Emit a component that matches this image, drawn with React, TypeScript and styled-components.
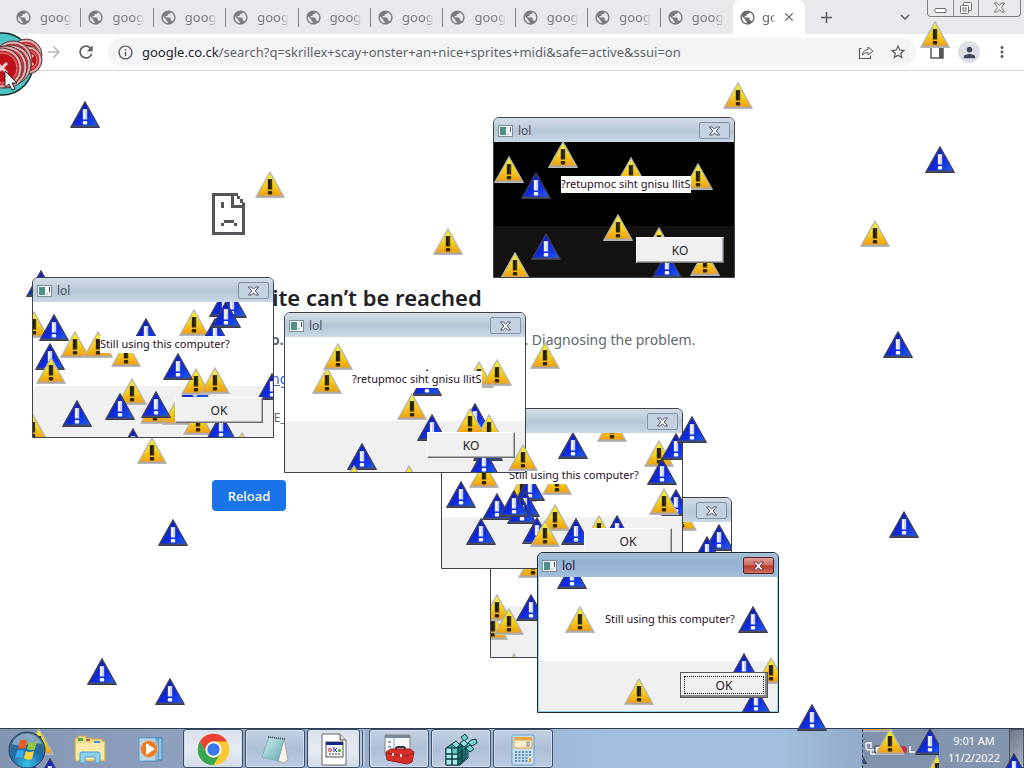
import React from "react";
import styled, { createGlobalStyle, css } from "styled-components";
import {
  MdPublic,
  MdRefresh,
  MdInfoOutline,
  MdStarBorder,
  MdPerson,
  MdMoreVert,
  MdKeyboardArrowDown,
  MdClose,
  MdAdd,
  MdArrowForward,
} from "react-icons/md";

const UI_FONT = '"Noto Sans", "Open Sans", sans-serif';

const GlobalStyle = createGlobalStyle`
  * { box-sizing: border-box; }
  body { margin: 0; background: #fff; font-family: ${UI_FONT}; }
  button, input { font-family: inherit; }
`;

const Screen = styled.div`
  position: relative;
  display: flex;
  flex-direction: column;
  min-height: 100vh;
  overflow: hidden;
`;

/* ---------- browser chrome ---------- */

const TabStrip = styled.header`
  display: flex;
  align-items: stretch;
  height: 34px;
  padding-left: 9px;
  background: #e8e9ec;
`;

const TabList = styled.nav`
  display: flex;
  flex: 0 1 724px;
  min-width: 0;
`;

const Tab = styled.button<{ $last?: boolean }>`
  display: flex;
  align-items: center;
  flex: 1 1 0;
  min-width: 0;
  gap: 8px;
  padding: 0 8px 0 6px;
  border: 0;
  background: linear-gradient(#85888c, #85888c) right 8px / 1px 19px no-repeat;
  ${(p) => p.$last && "background: none;"}
  color: #7a7c80;
  font-size: 13px;
  line-height: 18px;
  svg { flex: none; }
`;

const TabTitle = styled.span<{ $width: number }>`
  width: ${(p) => p.$width}px;
  overflow: hidden;
  text-align: left;
  white-space: nowrap;
  mask-image: linear-gradient(90deg, #000 70%, transparent);
`;

const ActiveTab = styled.div`
  display: flex;
  align-items: center;
  flex: none;
  width: 72px;
  padding-left: 6px;
  gap: 6px;
  border-radius: 7px 7px 0 0;
  background: #fff;
  color: #6a6c70;
  font-size: 13px;
  svg { flex: none; }
`;

const IconButton = styled.button<{ $size?: number }>`
  display: flex;
  align-items: center;
  justify-content: center;
  flex: none;
  width: ${(p) => p.$size ?? 20}px;
  height: ${(p) => p.$size ?? 20}px;
  padding: 0;
  border: 0;
  background: none;
  color: #5a5d61;
`;

const StripTools = styled.div`
  display: flex;
  align-items: center;
  justify-content: space-between;
  flex: 1;
  padding: 0 12px 0 11px;
`;

const WindowControls = styled.div`
  display: flex;
  width: 94px;
  height: 17px;
  margin-right: 3px;
  border: 1px solid #7c7f84;
  border-top: 0;
  border-radius: 0 0 4px 4px;
`;

const WindowControl = styled.button<{ $wide?: boolean }>`
  display: flex;
  justify-content: center;
  flex: ${(p) => (p.$wide ? 5 : 3)};
  padding: 1px 0 0;
  border: 0;
  background: none;
  & + & { border-left: 1px solid #8b8e93; }
`;

const Toolbar = styled.div`
  display: flex;
  align-items: center;
  height: 37px;
  padding: 0 12px 0 44px;
  gap: 12px;
  border-bottom: 1px solid #d4d5d7;
  background: #fff;
`;

const Omnibox = styled.form`
  display: flex;
  align-items: center;
  flex: 1;
  min-width: 0;
  height: 28px;
  padding: 0 8px 0 9px;
  gap: 8px;
  border-radius: 14px;
  background: #f3f4f5;
`;

const OmniboxActions = styled.div`
  display: flex;
  gap: 12px;
`;

const Address = styled.div`
  flex: 1;
  min-width: 0;
  height: 20px;
  color: #5f6368;
  font-size: 13px;
  line-height: 20px;
  white-space: nowrap;
  b { color: #25272a; font-weight: 400; }
`;

const Avatar = styled.button`
  display: flex;
  align-items: center;
  justify-content: center;
  width: 22px;
  height: 22px;
  padding: 0;
  border: 0;
  border-radius: 50%;
  background: #dcdfe6;
  color: #3d4a5c;
`;

/* ---------- error page ---------- */

const Page = styled.main`
  flex: 1;
  padding: 122px 24px 20px 212px;
  color: #646669;
  font-size: 14px;
  line-height: 20px;
  svg { display: block; }
`;

const Heading = styled.h1`
  margin: 45px 0 0;
  color: #202124;
  font-size: 22px;
  font-weight: 600;
  line-height: 34px;
`;

const Line = styled.p`
  margin: 16px 0 19px;
  white-space: nowrap;
`;

const Link = styled.a`
  color: #3567c8;
`;

const Code = styled.p`
  margin: 19px 0 52px;
  font-size: 12px;
`;

const Reload = styled.button`
  display: block;
  width: 74px;
  height: 31px;
  padding: 0;
  border: 0;
  border-radius: 4px;
  background: #1a73e8;
  color: #fff;
  font-size: 13px;
  font-weight: 500;
`;

/* ---------- stray warning icons ---------- */

type Mark = [kind: "y" | "b", left: number, top: number];

const Spot = styled.svg<{ $x: number; $y: number }>`
  position: absolute;
  left: ${(p) => p.$x}px;
  top: ${(p) => p.$y}px;
  width: 30px;
  height: 28px;
  pointer-events: none;
`;

function Warn({ mark: [kind, x, y] }: { mark: Mark }) {
  const blue = kind === "b";
  return (
    <Spot $x={x} $y={y} viewBox="0 0 30 28" aria-hidden="true">
      <path d="M15 .5 29.5 26.5H.5Z" fill={blue ? "#474a60" : "#b0aaa4"} stroke={blue ? "#3a3c50" : "#b9b7bb"} strokeLinejoin="round" />
      <path d="M15 2.300 27.500 24.600H2.500Z" fill={blue ? "url(#blueFill)" : "url(#yellowFill)"} />
      <path d="M12.800 8h4.400v10.500h-4.400Z" fill={blue ? "#cdd3fb" : "#3a300a"} />
      <path d="M13.500 9h1.500v9h-1.500Z" fill={blue ? "#fff" : "#1c1704"} />
      <rect x="12.800" y="20" width="4.400" height="3.500" rx="1" fill={blue ? "#f4f6ff" : "#30280a"} />
    </Spot>
  );
}

const Marks = ({ items }: { items: Mark[] }) => (
  <>
    {items.map((m, i) => (
      <Warn key={i} mark={m} />
    ))}
  </>
);

/* ---------- message boxes ---------- */

const Box = styled.section<{ $x: number; $y: number; $active?: boolean }>`
  position: absolute;
  isolation: isolate;
  left: ${(p) => p.$x}px;
  top: ${(p) => p.$y}px;
  display: flex;
  flex-direction: column;
  width: 242px;
  height: 161px;
  overflow: hidden;
  border: 1px solid ${(p) => (p.$active ? "#1d2a38" : "#3d444d")};
  border-radius: 6px 6px 0 0;
  background: ${(p) => (p.$active ? "#8fd5ea" : "#dfe6ee")};
  ${(p) => p.$active && "padding: 0 1px 1px;"}
`;

const TitleBar = styled.div<{ $active?: boolean }>`
  position: relative;
  z-index: 1;
  display: flex;
  align-items: center;
  flex: none;
  height: 24px;
  padding: 1px ${(p) => (p.$active ? 3 : 4)}px 0;
  gap: 5px;
  background: ${(p) =>
    p.$active
      ? "linear-gradient(#a9c0d8, #93b1d3 40%, #a5bedb)"
      : "linear-gradient(#d3dde7, #b7c7d7 55%, #c9d7e6)"};
  color: ${(p) => (p.$active ? "#20203a" : "#50555c")};
  font-size: 12px;
  line-height: 20px;
`;

const Caption = styled.span`
  flex: 1;
`;

const Close = styled.button<{ $active?: boolean }>`
  display: flex;
  align-items: center;
  justify-content: center;
  width: 31px;
  height: 17px;
  padding: 0;
  border: 1px solid ${(p) => (p.$active ? "#5a2226" : "#8592a5")};
  border-radius: 2px;
  background: ${(p) =>
    p.$active ? "linear-gradient(#e0a097, #cc6a5d 48%, #b53a2c 52%, #cf6f5c)" : "#c3d1e0"};
`;

const Body = styled.div<{ $dark?: boolean; $active?: boolean }>`
  display: flex;
  align-items: center;
  flex: 1;
  padding-left: ${(p) => (p.$active ? 66 : 67)}px;
  background: ${(p) => (p.$dark ? "#000" : "#fff")};
`;

const Message = styled.p<{ $bare?: boolean }>`
  position: relative;
  z-index: 1;
  margin: 0;
  height: 17px;
  background: ${(p) => (p.$bare ? "none" : "#fff")};
  color: #2a0f22;
  font-size: 11px;
  line-height: 16px;
  white-space: nowrap;
`;

const Footer = styled.div<{ $dark?: boolean; $active?: boolean }>`
  display: flex;
  align-items: flex-start;
  justify-content: flex-end;
  flex: none;
  height: ${(p) => (p.$active ? 50 : 51)}px;
  padding: 11px ${(p) => (p.$active ? 9 : 10)}px 0;
  background: ${(p) => (p.$dark ? "#131211" : "#f0f0f0")};
`;

const Push = styled.button<{ $focus?: boolean }>`
  position: relative;
  z-index: 1;
  width: 88px;
  height: 26px;
  padding: 0;
  border: 1px solid;
  border-color: #fafafa #707070 #707070 #fafafa;
  background: #f0f0f0;
  box-shadow: inset -1px -1px 0 #b0b0b0;
  color: #222;
  font-size: 12px;
  ${(p) =>
    p.$focus &&
    css`
      border-color: #555;
      box-shadow: inset -2px -2px 0 #858585, inset 1px 1px 0 #fff;
      outline: 1px dotted #111;
      outline-offset: -5px;
    `}
`;

type DialogProps = {
  x: number;
  y: number;
  marks: Mark[];
  mirrored?: boolean;
  dark?: boolean;
  active?: boolean;
};

/* Mark positions count from the outer edge of the box, inside its 1px border. */
const insideBorder = ([kind, x, y]: Mark): Mark => [kind, x - 1, y - 1];

function Dialog({ x, y, marks, mirrored, dark, active }: DialogProps) {
  return (
    <Box $x={x} $y={y} $active={active} role="dialog" aria-label="lol">
      <TitleBar $active={active}>
        <svg width="15" height="12" viewBox="0 0 15 12" aria-hidden="true">
          <rect x=".5" y=".5" width="14" height="11" fill="#f4f7fa" stroke="#7f8d99" />
          <rect x="2" y="2" width="6" height="8" fill="#4e8f8b" />
          <path d="M9.500 9h1M12.500 2v5" stroke="#4a5666" />
        </svg>
        <Caption>lol</Caption>
        <Close $active={active} aria-label="Close">
          <svg width="13" height="10" viewBox="0 0 13 10">
            <path
              d="M1.500 1h3l2 2.200 2-2.200h3L8.200 5l3.300 4h-3l-2-2.200L4.500 9h-3l3.300-4Z"
              fill="#fff"
              stroke={active ? "#70343a" : "#4d5566"}
            />
          </svg>
        </Close>
      </TitleBar>
      <Body $dark={dark} $active={active}>
        <Marks items={marks.map(insideBorder)} />
        <Message $bare={active}>{mirrored ? "?retupmoc siht gnisu llitS" : "Still using this computer?"}</Message>
      </Body>
      <Footer $dark={dark} $active={active}>
        <Push $focus={active}>{mirrored ? "KO" : "OK"}</Push>
      </Footer>
    </Box>
  );
}

const boxes: DialogProps[] = [
  {
    x: 490, y: 497,
    marks: [["y", 177, 7], ["b", 214, 27], ["b", 202, 39], ["y", 28, 54], ["y", -12, 116], ["y", -8, 97], ["b", 26, 97], ["y", 4, 111], ["y", 9, 156]],
  },
  {
    x: 441, y: 408,
    marks: [
      ["y", 156, 7], ["b", 117, 24], ["y", 203, 32], ["b", 220, 25], ["b", 206, 50], ["b", 5, 73], ["y", 28, 53],
      ["y", 66, 67], ["y", 101, 60], ["b", 74, 66], ["b", 69, 82], ["b", 41, 85], ["b", 66, 89], ["b", 58, 82],
      ["b", 220, 81], ["y", 208, 80], ["y", 99, 96], ["y", 143, 107], ["b", 161, 107], ["b", 120, 110],
      ["b", 81, 109], ["y", 89, 112], ["b", 25, 110],
    ],
  },
  {
    x: 284, y: 312, mirrored: true,
    marks: [
      ["y", 28, 55], ["y", 39, 31], ["y", 180, 49], ["y", 198, 47], ["b", 128, 57], ["y", 113, 81], ["b", 133, 102],
      ["b", 176, 91], ["y", 190, 102], ["y", 171, 96], ["b", 63, 131], ["y", 55, 153], ["y", 110, 153],
      ["b", 189, 122], ["b", 185, 136],
    ],
  },
  {
    x: 32, y: 277,
    marks: [
      ["y", -13, 34], ["b", 7, 37], ["b", 99, 41], ["y", 147, 32], ["b", 168, 41], ["b", 177, 13], ["b", 185, 14],
      ["b", 179, 24], ["y", 28, 54], ["y", 51, 54], ["y", 79, 63], ["b", 3, 66], ["y", 4, 80], ["b", 148, 96],
      ["y", 149, 91], ["b", 131, 76], ["y", 168, 90], ["y", 85, 101], ["b", 73, 116], ["y", 108, 120],
      ["y", 130, 121], ["b", 109, 114], ["b", 30, 123], ["y", 151, 131], ["b", 174, 136], ["b", 225, 96],
      ["y", -14, 137], ["b", 86, 151], ["y", 195, 155],
    ],
  },
  {
    x: 493, y: 117, mirrored: true, dark: true,
    marks: [
      ["y", 1, 39], ["y", 55, 24], ["b", 28, 55], ["y", 123, 40], ["y", 190, 46], ["y", 110, 97], ["y", 151, 110],
      ["b", 38, 116], ["y", 7, 135], ["b", 159, 134], ["y", 197, 132],
    ],
  },
  {
    x: 537, y: 552, active: true,
    marks: [["b", 20, 10], ["y", 28, 54], ["b", 201, 54], ["b", 192, 101], ["y", 219, 105], ["y", 87, 126], ["b", 204, 135]],
  },
];

const behind: Mark[] = [
  ["y", 723, 82], ["y", 255, 171], ["y", 433, 228], ["y", 860, 220], ["y", 920, 21], ["y", 137, 437], ["y", 530, 342],
  ["b", 70, 101], ["b", 925, 146], ["b", 883, 331], ["b", 158, 519], ["b", 889, 511], ["b", 87, 658], ["b", 155, 678],
  ["b", 797, 704], ["b", 26, 270],
];

const front: Mark[] = [["b", 677, 416], ["y", 508, 444]];

/* ---------- error badges under the mouse pointer ---------- */

const Pointer = styled.svg`
  position: absolute;
  left: 0;
  top: 30px;
`;

const Badge = ({ x, y, r }: { x: number; y: number; r: number }) => (
  <g>
    <circle cx={x} cy={y} r={r} fill="#c9a0a0" stroke="#5f3437" strokeWidth="1" />
    <circle cx={x} cy={y} r={r - 2} fill="#c4323a" stroke="#ecd0d0" strokeWidth="1" />
    <circle cx={x} cy={y} r={r - 5} fill="#c01018" stroke="#dc8888" strokeWidth="1" />
    <path d={`M${x - 5} ${y - 5}l10 10m0-10-10 10`} stroke="#f0d0d0" strokeWidth="3" />
  </g>
);

/* ---------- taskbar ---------- */

const Taskbar = styled.footer`
  position: relative;
  display: flex;
  height: 40px;
  overflow: hidden;
  border-top: 1px solid #2f3d52;
  background: linear-gradient(90deg, #8495b2, #8fa1bf 18%, #9ab3d2 45%, #a3bfdf 60%, #a3bfdf 76%, #94abc9 84%);
`;

const Start = styled.button`
  position: relative;
  width: 59px;
  padding: 0 0 0 8px;
  border: 0;
  background: none;
  svg:last-child { position: relative; display: block; }
`;

const Pinned = styled.button`
  display: flex;
  align-items: center;
  justify-content: center;
  width: 62px;
  padding: 2px 0 0;
  border: 0;
  background: none;
`;

const Running = styled(Pinned)<{ $lit?: boolean; $stacked?: boolean }>`
  width: ${(p) => (p.$stacked ? 53 : 60)}px;
  margin-right: ${(p) => (p.$stacked ? 9 : 2)}px;
  border: 1px solid #3f4f68;
  border-radius: 3px;
  background: ${(p) =>
    p.$lit ? "linear-gradient(#d9e1ec, #e6ebf3 50%, #d3dcea)" : "linear-gradient(#c4d1e3, #aebfd8 50%, #bccbe1)"};
  box-shadow: inset 0 0 0 1px #d5dfec${(p) => (p.$stacked ? ", 3px 0 0 -1px #b5c4d9, 4px 0 0 -1px #4a5970, 6px 0 0 -1px #b5c4d9" : "")};
`;

const Tray = styled.div`
  position: relative;
  display: flex;
  width: 162px;
  margin-left: auto;
  border-left: 1px dashed #3c4c64;
  background: #8192ac;
`;

const TrayIcons = styled.div`
  position: relative;
  flex: 1;
  overflow: hidden;
`;

const Clock = styled.time`
  position: relative;
  width: 70px;
  padding-top: 3px;
  background: #8394ae;
  color: #fff;
  font-size: 11px;
  line-height: 17px;
  text-align: center;
`;

const ShowDesktop = styled.button`
  width: 15px;
  padding: 0;
  border: 1px solid #4a5566;
  background: linear-gradient(135deg, #6c7888, #a9b3c0);
`;

function StartOrb() {
  return (
    <svg width="38" height="38" viewBox="0 0 38 38">
      <circle cx="19" cy="20" r="18" fill="url(#orb)" stroke="#25415f" />
      <path d="M4 14a16 16 0 0 1 30 0c-9-3-20 4-30 0Z" fill="#cfe0ee" opacity=".5" />
      <path d="M12 11c3-2 5-1 7 0l-2 8c-3-1-5-1-7 0Z" fill="#ee5a24" />
      <path d="M21 12c3 1 5 1 8-1l-2 8c-3 2-5 1-8 0Z" fill="#93c83e" />
      <path d="M9 21c3-2 5-1 7 0l-2 7c-2-1-4-1-7 0Z" fill="#3aa5e8" />
      <path d="M18 21c3 2 5 1 8 0l-2 8c-3 1-5 1-8-1Z" fill="#fdd33c" />
    </svg>
  );
}

function FolderIcon() {
  return (
    <svg width="34" height="32" viewBox="0 0 34 32">
      <path d="M2 4h3V2h8v2h6v1h10v2h3v20H2Z" fill="#f0da86" stroke="#c2a75a" />
      <path d="M5 4h5v3H5Z" fill="#4ca64c" />
      <path d="M13 5h4v2h-4Z" fill="#cc4d38" />
      <path d="M21 7h6v2h-6Z" fill="#4b8fd0" />
      <path d="M3 9h28v16H3Z" fill="#f8eaa8" />
      <path d="M7 29V20q0-2 2-2h16q2 0 2 2v9h-5v-6H12v6Z" fill="#8fd0ec" stroke="#5a9fc5" />
    </svg>
  );
}

function MediaIcon() {
  return (
    <svg width="30" height="28" viewBox="0 0 30 28">
      <path d="M9 2h16v22H9Z" fill="#8fc4e6" stroke="#3b86bd" />
      <path d="M5 3h16v22H5Z" fill="#b7dcf2" stroke="#3b86bd" />
      <path d="M2 2h17v23H2Z" fill="#b9d6ea" stroke="#5b9dca" />
      <circle cx="12" cy="13" r="8.500" fill="#ee7a22" stroke="#d9c4b0" />
      <path d="m9 7 9 6-9 6Z" fill="#fff" />
    </svg>
  );
}

function ChromeIcon() {
  return (
    <svg width="33" height="33" viewBox="0 0 48 48">
      <circle cx="24" cy="24" r="23" fill="#fcc934" />
      <path d="M4.100 12.500A23 23 0 0 1 43.900 12.500H24A11.500 11.500 0 0 0 14 29.700Z" fill="#ea4335" />
      <path d="M4.100 12.500 14 29.700A11.500 11.500 0 0 0 34 29.700L24 47A23 23 0 0 1 4.100 12.500Z" fill="#34a853" />
      <circle cx="24" cy="24" r="11.500" fill="#fff" />
      <circle cx="24" cy="24" r="9" fill="#3b78e7" />
    </svg>
  );
}

function NotepadIcon() {
  return (
    <svg width="34" height="32" viewBox="0 0 34 32">
      <path d="m26 4 4 22-4 3-6-2Z" fill="#f4f2ea" stroke="#a8a69a" />
      <path d="M11 3 26 5 20 27 4 23Z" fill="url(#note)" stroke="#7fb0b4" />
      <path d="m10 3 17 2" stroke="#56636a" strokeWidth="2" strokeDasharray="1 1" />
    </svg>
  );
}

function BatchIcon() {
  return (
    <svg width="26" height="33" viewBox="0 0 26 33">
      <path d="M1 1h18l6 6v25H1Z" fill="#fff" stroke="#666" />
      <path d="M19 1v6h6" fill="#ddd" stroke="#555" />
      <rect x="5" y="9" width="17" height="15" fill="#f2f2f2" stroke="#555" />
      <path d="M5 9h17v3H5Z" fill="#1c2585" />
      <circle cx="9" cy="17" r="1.500" fill="none" stroke="#c33" />
      <path d="M13 14v5m3-4-2 2 2 2" stroke="#22c" fill="none" />
      <circle cx="18.500" cy="17.500" r="1.500" fill="#3a3" />
      <path d="M8 21h11" stroke="#444" strokeDasharray="2 1" />
    </svg>
  );
}

function ToolboxIcon() {
  return (
    <svg width="34" height="34" viewBox="0 0 34 34">
      <path d="M3 2h25v20H3Z" fill="#f5f7fa" stroke="#888" />
      <path d="M3 2h25v3H3Z" fill="#7c8794" />
      <path d="M6 8h3v2H6Zm0 5h3v2H6Z" fill="#8fa9cc" />
      <path d="M12 5v12" stroke="#9aa" />
      <path d="M14 17v-1q0-2 2-2h5q2 0 2 2v1" fill="none" stroke="#333" strokeWidth="2" />
      <path d="m4 19 5-3h19l4 3-2 10-5 2-20-4Z" fill="#d3302a" stroke="#a01d1a" />
      <path d="m4 20 20 3 8-3" stroke="#94201d" fill="none" />
      <path d="M11 20v3m8-2v3" stroke="#e8d8d8" strokeWidth="2" />
    </svg>
  );
}

function RegistryIcon() {
  return (
    <svg width="34" height="34" viewBox="0 0 34 34" stroke="#10383c">
      <path d="m2 15 6-4h14l2 4v10l-8 7H2Z" fill="#2f9ea0" />
      <path d="M2 15h6v6H2Zm0 6h6v5H2Zm0 5h6v6H2Zm6-5h6v5H8Zm0 5h6v6H8Z" fill="#a7ecec" />
      <path d="M8 15h6v6H8Z" fill="#63cbcb" />
      <path d="m14 15 4-3v6l-4 3Zm0 6 4-3v6l-4 3Zm0 6 4-3v5l-4 3Zm4-9 4-4v6l-4 4Zm0 6 4-4v5l-4 4Z" fill="#18787c" />
      <path d="m8 11 4-3 4 4-4 3Zm8-1 4-3 4 4-4 3Z" fill="#8fe0e0" />
      <path d="m17 4 4-3 3 4-4 3Zm10 3 5-1 1 4-5 3-4-3Zm-5 8 4-3 4 4-4 3Z" fill="#6fd6d6" />
    </svg>
  );
}

function CalculatorIcon() {
  return (
    <svg width="24" height="32" viewBox="0 0 24 32">
      <rect x="1" y="1" width="22" height="30" rx="1" fill="#c9dff0" stroke="#6f9fc6" />
      <rect x="3" y="3" width="18" height="3" fill="#eda74b" />
      <rect x="3" y="6" width="18" height="8" fill="#f7ecd0" stroke="#e0a54f" />
      <rect x="16" y="8" width="2" height="4" fill="none" stroke="#888" />
      <path d="M4 18h13M4 21h13M4 24h13M4 27h13" stroke="#5f92c2" strokeWidth="2" strokeDasharray="2 1.500" />
      <path d="M19 17v5" stroke="#5f92c2" strokeWidth="2" strokeDasharray="2 1" />
      <path d="M19 24v4" stroke="#e89b2d" strokeWidth="2" />
    </svg>
  );
}

export default function App() {
  return (
    <Screen>
      <GlobalStyle />

      <TabStrip>
        <TabList aria-label="Open tabs">
          {Array.from({ length: 10 }, (_, i) => (
            <Tab key={i} $last={i === 9}>
              <MdPublic size={17} />
              <TabTitle $width={32}>google</TabTitle>
            </Tab>
          ))}
        </TabList>
        <ActiveTab>
          <MdPublic size={17} />
          <TabTitle $width={14}>google</TabTitle>
          <IconButton $size={14} aria-label="Close tab">
            <MdClose size={14} />
          </IconButton>
        </ActiveTab>
        <StripTools>
          <IconButton aria-label="New tab">
            <MdAdd size={19} />
          </IconButton>
          <IconButton aria-label="Search tabs">
            <MdKeyboardArrowDown size={18} />
          </IconButton>
        </StripTools>
        <WindowControls>
          <WindowControl aria-label="Minimize">
            <svg width="13" height="14" viewBox="0 0 13 14">
              <rect x="1" y="7.500" width="11" height="4" rx="1" fill="#fff" stroke="#6b6e73" />
            </svg>
          </WindowControl>
          <WindowControl aria-label="Restore">
            <svg width="14" height="14" viewBox="0 0 14 14" fill="#fff" stroke="#6b6e73">
              <rect x="4.500" y="1.500" width="8" height="8" rx="1" />
              <rect x="1.500" y="4.500" width="8" height="8" rx="1" />
              <rect x="4" y="7" width="3" height="3" />
            </svg>
          </WindowControl>
          <WindowControl $wide aria-label="Close window">
            <svg width="13" height="13" viewBox="0 0 13 13">
              <path d="M1.500 2h3l2 2.500 2-2.500h3L8.300 6.500l3.200 4.500h-3l-2-2.500-2 2.500h-3l3.200-4.500Z" fill="#fff" stroke="#6b6e73" />
            </svg>
          </WindowControl>
        </WindowControls>
      </TabStrip>

      <Toolbar>
        <IconButton aria-label="Forward">
          <MdArrowForward size={18} color="#b4b6b9" />
        </IconButton>
        <IconButton aria-label="Reload page">
          <MdRefresh size={20} />
        </IconButton>
        <Omnibox>
          <MdInfoOutline size={17} color="#5a5d61" />
          <Address>
            <b>google.co.ck</b>/search?q=skrillex+scay+onster+an+nice+sprites+midi&amp;safe=active&amp;ssui=on
          </Address>
          <OmniboxActions>
            <IconButton type="button" aria-label="Share">
              <svg width="16" height="15" viewBox="0 0 16 15" fill="none" stroke="#5a5d61">
                <path d="M3.500 3.500h-2v10h11v-3" strokeWidth="1.200" />
                <path d="M4.500 10q.5-5 5.500-5.500V2l5 4.200L10 10V7.500q-3.500 0-5.500 2.500Z" strokeLinejoin="round" />
              </svg>
            </IconButton>
            <IconButton type="button" aria-label="Bookmark">
              <MdStarBorder size={18} />
            </IconButton>
          </OmniboxActions>
        </Omnibox>
        <IconButton $size={18} aria-label="Side panel">
          <svg width="14" height="13" viewBox="0 0 14 13">
            <path d="M1 1h12v11H1Z" fill="none" stroke="#55585c" strokeWidth="1.500" />
            <path d="M9 1h4v11H9Z" fill="#55585c" />
          </svg>
        </IconButton>
        <Avatar aria-label="Profile">
          <MdPerson size={17} />
        </Avatar>
        <IconButton aria-label="Menu">
          <MdMoreVert size={18} />
        </IconButton>
      </Toolbar>

      <Page>
        <svg width="34" height="42" viewBox="0 0 34 42" aria-hidden="true">
          <path d="M26 1.500H1.500v39h30V9.500M20.500 2v11.500H31" fill="none" stroke="#55565a" strokeWidth="3" />
          <path d="M25 3h3v3h-3Zm3 3h3v4h-3ZM9 9h3v6H9Zm3 18h10v3H12Zm-3 3h3v3H9Zm13 0h3v3h-3Z" fill="#55565a" />
        </svg>
        <Heading>This site can’t be reached</Heading>
        <Line>
          <b>google.co.ck</b>’s DNS address could not be found. Diagnosing the problem.
        </Line>
        <Link href="#diagnostics">Try running Windows Network Diagnostics.</Link>
        <Code>DNS_PROBE_STARTED</Code>
        <Reload>Reload</Reload>
      </Page>

      <Taskbar>
        <Start aria-label="Start">
          <Warn mark={["y", 24, -1]} />
          <Warn mark={["b", 35, 29]} />
          <Warn mark={["b", 15, 28]} />
          <StartOrb />
        </Start>
        <Pinned aria-label="File Explorer">
          <FolderIcon />
        </Pinned>
        <Pinned aria-label="Media Player">
          <MediaIcon />
        </Pinned>
        <Running aria-label="Chrome" $lit>
          <ChromeIcon />
        </Running>
        <Running aria-label="Notepad">
          <NotepadIcon />
        </Running>
        <Running aria-label="Message boxes" $lit $stacked>
          <BatchIcon />
        </Running>
        <Running aria-label="Toolbox">
          <ToolboxIcon />
        </Running>
        <Running aria-label="Registry Editor">
          <RegistryIcon />
        </Running>
        <Running aria-label="Calculator">
          <CalculatorIcon />
        </Running>
        <Tray>
          <TrayIcons>
            <svg width="76" height="39" viewBox="0 0 76 39" aria-hidden="true">
              <path d="M3 14v4q0 3 3 3h6M3 14h5v5M8 21v4h6M47 17v6h5" fill="none" stroke="#f4f4f4" strokeWidth="1.500" />
              <path d="M12 17h26v7H12Z" fill="#e9e9ea" stroke="#333" />
              <circle cx="40" cy="21" r="4" fill="#c33440" />
            </svg>
            <Warn mark={["y", 0, -24]} />
            <Warn mark={["y", 12, -1]} />
            <Warn mark={["b", 52, -1]} />
            <Warn mark={["y", 59, 26]} />
            <Warn mark={["b", -26, 8]} />
          </TrayIcons>
          <Clock>
            9:01 AM
            <br />
            11/2/2022
          </Clock>
          <ShowDesktop aria-label="Show desktop" />
          <Warn mark={["b", 136, 24]} />
        </Tray>
      </Taskbar>

      <Marks items={behind} />
      {boxes.map((b) => (
        <Dialog key={`${b.x}-${b.y}`} {...b} />
      ))}
      <Marks items={front} />

      <Pointer width="60" height="68" viewBox="0 0 60 68" aria-hidden="true">
        <defs>
          <linearGradient id="yellowFill" x1="0" y1="0" x2="0" y2="1">
            <stop offset="0" stopColor="#f4f03a" />
            <stop offset=".5" stopColor="#f5d51e" />
            <stop offset="1" stopColor="#f0a012" />
          </linearGradient>
          <linearGradient id="blueFill" x1="0" y1="0" x2="1" y2="1">
            <stop offset="0" stopColor="#0c14a8" />
            <stop offset=".6" stopColor="#0f2ce0" />
            <stop offset="1" stopColor="#1d5cf5" />
          </linearGradient>
          <radialGradient id="orb" cx=".5" cy=".9" r=".9">
            <stop offset="0" stopColor="#35c3e8" />
            <stop offset=".5" stopColor="#1f6aa5" />
            <stop offset="1" stopColor="#52718f" />
          </radialGradient>
          <linearGradient id="note" x1="0" y1="0" x2="1" y2="1">
            <stop offset="0" stopColor="#d5efef" />
            <stop offset="1" stopColor="#5cabb0" />
          </linearGradient>
        </defs>
        <circle cx="2" cy="34" r="31" fill="#4cc4c4" stroke="#15292b" strokeWidth="1.500" />
        <Badge x={26} y={25} r={16} />
        <Badge x={28} y={30} r={14} />
        <Badge x={13} y={30} r={19} />
        <Badge x={11} y={35} r={20} />
        <Badge x={6} y={37} r={21} />
        <Badge x={2} y={38} r={20} />
        <path d="M5 41v16l4-3 3 6 3-1-3-6h5Z" fill="#fff" stroke="#222" />
      </Pointer>
    </Screen>
  );
}
